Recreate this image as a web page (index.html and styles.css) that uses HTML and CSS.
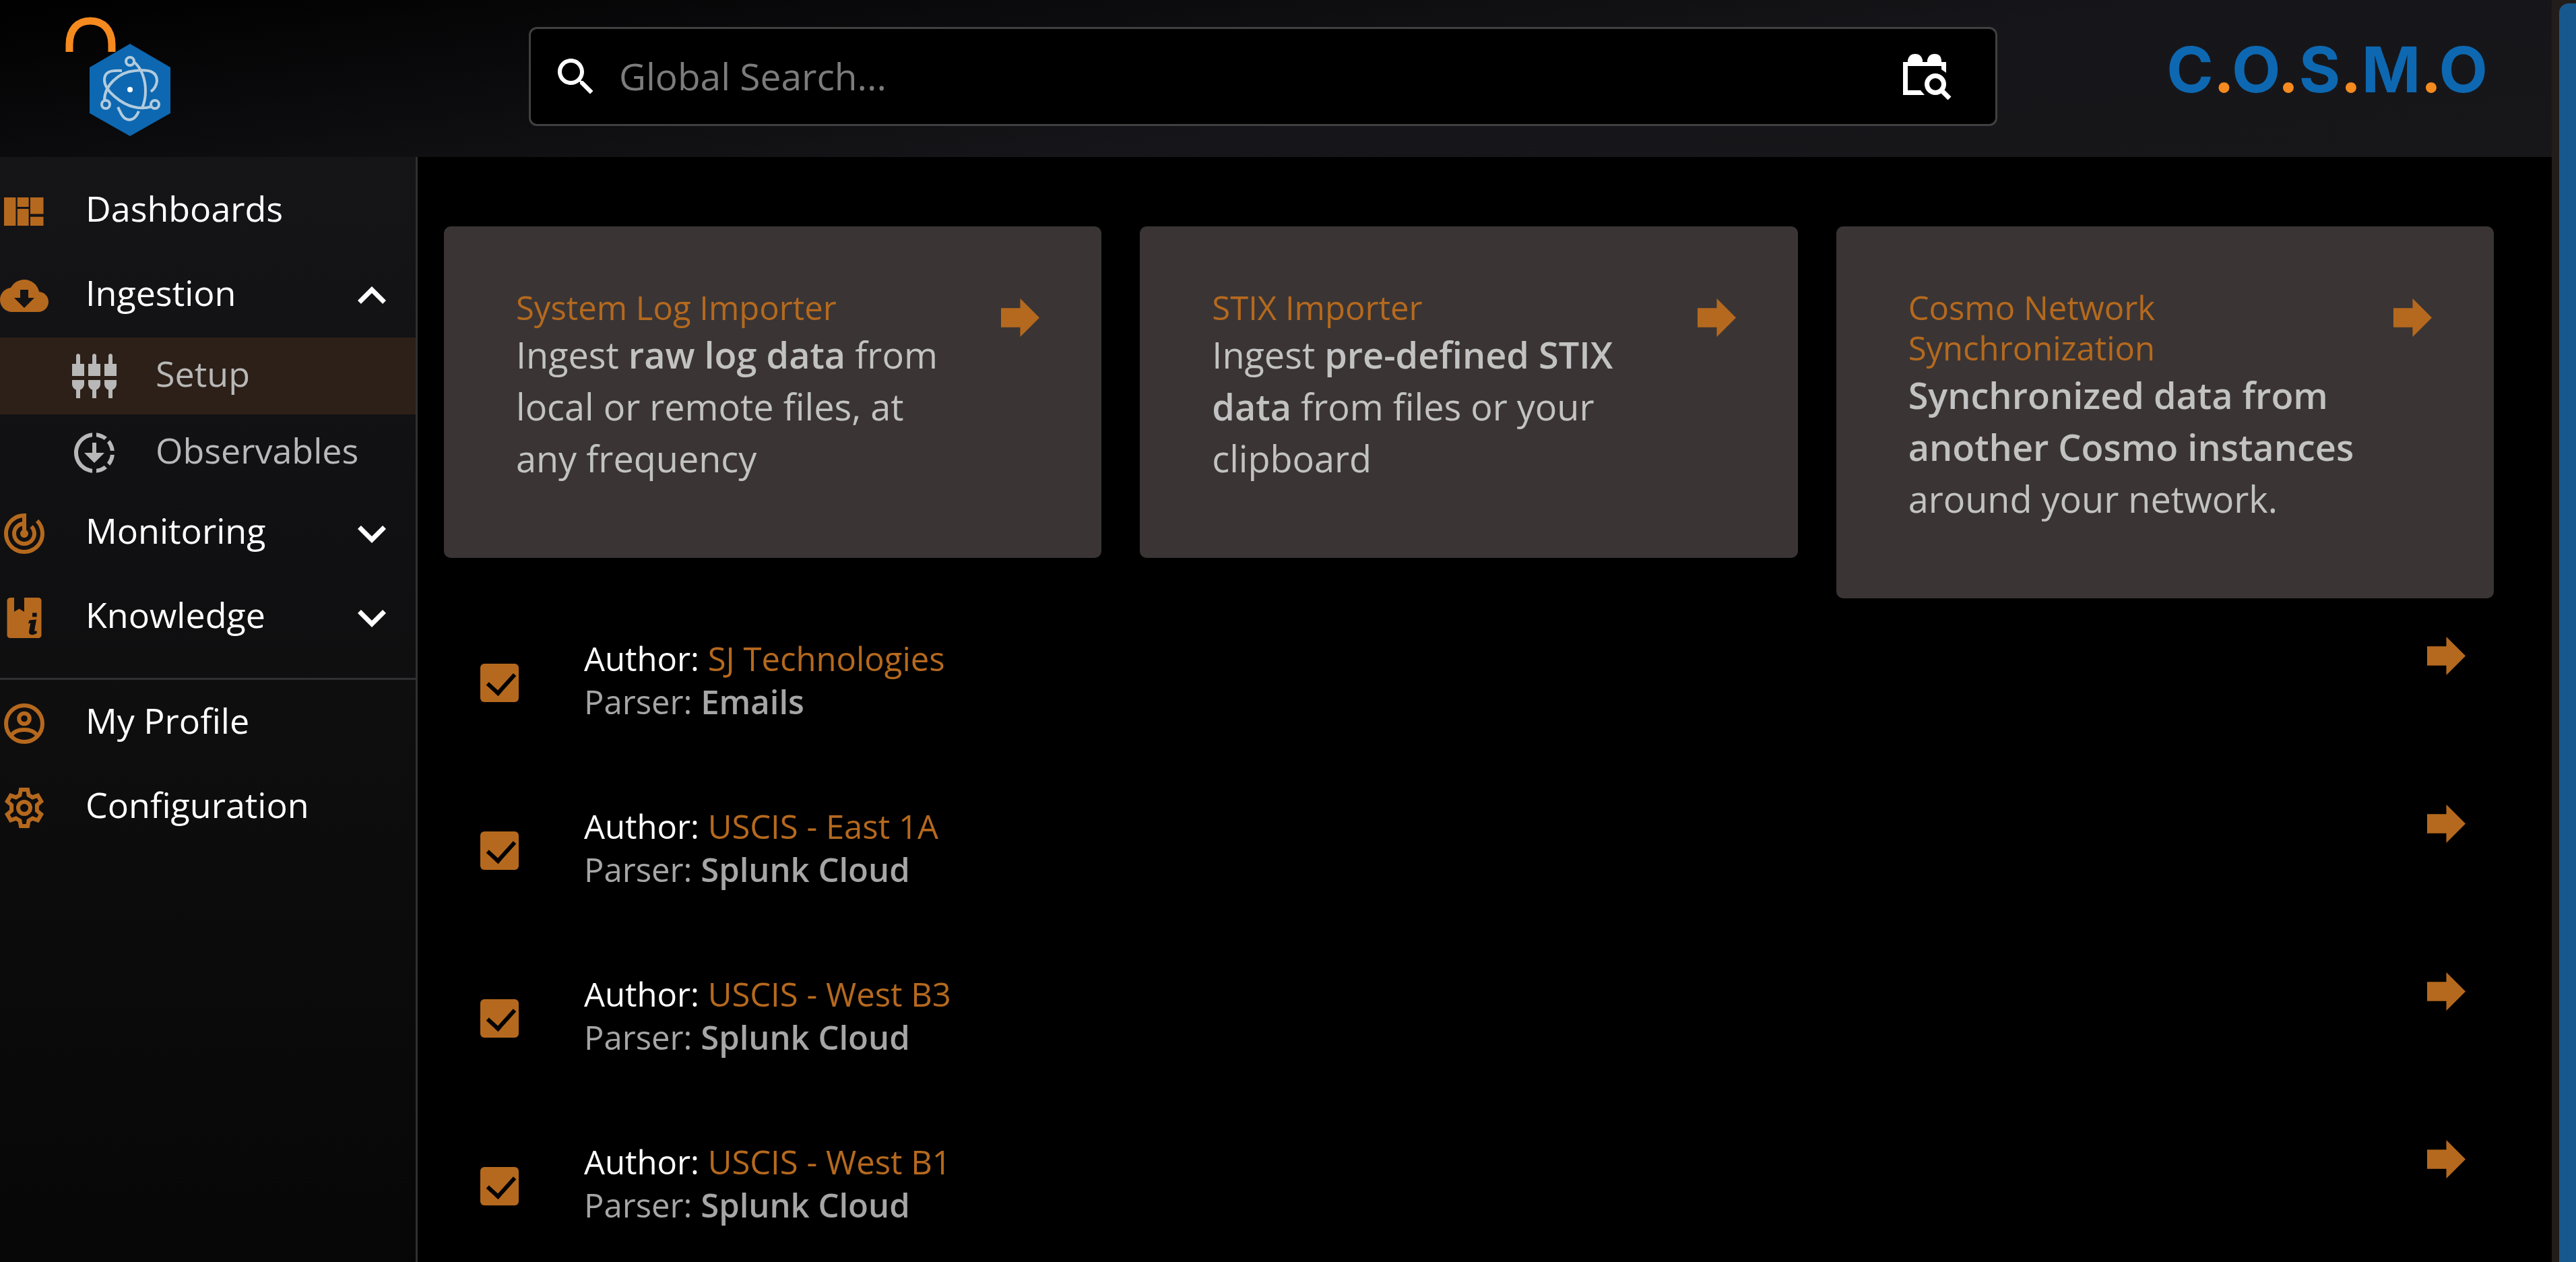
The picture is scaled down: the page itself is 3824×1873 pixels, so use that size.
FILE: index.html
```html
<!DOCTYPE html>
<html lang="en">
<head>
<meta charset="utf-8">
<meta name="viewport" content="width=device-width, initial-scale=1">
<title>C.O.S.M.O - Ingestion Setup</title>
<link rel="stylesheet" href="styles.css">
</head>
<body>
<svg class="defs" aria-hidden="true">
  <symbol id="forward" viewBox="4 4 16 16"><path d="M12 8V4l8 8-8 8v-4H4V8z"/></symbol>
  <symbol id="down" viewBox="0 0 24 24"><path d="M16.59 8.59 12 13.17 7.41 8.59 6 10l6 6 6-6z"/></symbol>
  <symbol id="up" viewBox="0 0 24 24"><path d="m12 8-6 6 1.410 1.410L12 10.830l4.590 4.580L18 14z"/></symbol>
</svg>
<div class="app">
  <header class="topbar">
    <a class="brand" href="#" aria-label="Home">
      <svg viewBox="96 20 160 184" aria-hidden="true">
        <path d="M103 77V66C103 44 115 31 134 31S166 44 166 66V77" fill="none" stroke="#f58a1f" stroke-width="11"/>
        <path d="M193 65 253 100V168L193 202 133 168V100Z" fill="#0d68b1"/>
        <g fill="none" stroke="#b3cbdd" stroke-width="4">
          <circle cx="193" cy="91" r="6"/><circle cx="157" cy="155" r="6"/><circle cx="230" cy="155" r="6"/>
          <path d="M199 92C210 101 216 118 216 135Q216 149 211 160"/>
          <path d="M206 165C199 182 185 182 178 165L175 159"/>
          <path d="M155 149C155 127 176 107 200 105C224 102 233 108 233 120Q232 130 224 136"/>
          <path d="M181 105C161 104 155 108 155 119C155 134 180 155 200 159Q213 162 225 158"/>
        </g>
        <circle cx="193" cy="133" r="4" fill="#fff"/>
      </svg>
    </a>
    <form class="search" role="search">
      <svg class="icon" viewBox="0 0 24 24" aria-hidden="true"><path d="M15.500 14h-.790l-.280-.270C15.410 12.590 16 11.110 16 9.500 16 5.910 13.090 3 9.500 3S3 5.910 3 9.500 5.910 16 9.500 16c1.610 0 3.090-.590 4.230-1.570l.270.280v.790l5 4.990L20.490 19l-4.990-5zm-6 0C7.010 14 5 11.990 5 9.500S7.010 5 9.500 5 14 7.010 14 9.500 11.990 14 9.500 14z"/></svg>
      <input type="search" placeholder="Global Search..." aria-label="Global Search">
      <button type="button" aria-label="Search by date">
        <svg class="calendar" viewBox="0 0 72 68" aria-hidden="true">
          <path d="M7 12V9Q9 0 18 0T29 9V12H36V9Q38 0 47 0T57 9V12H64V28L57 23V18H7V54H26L32 61H0V12Z"/>
          <g fill="none" stroke="#fff" stroke-width="7"><circle cx="48" cy="45" r="12.500"/><path d="m57 54 12 12"/></g>
        </svg>
      </button>
    </form>
    <a class="wordmark" href="#">C<i>.</i>O<i>.</i>S<i>.</i>M<i>.</i>O</a>
  </header>

  <nav class="sidebar" aria-label="Main">
    <a class="item" href="#">
      <svg class="icon" viewBox="0 0 24 24" aria-hidden="true"><path d="M2 5h5.800v14H2zM8.600 5h5.600v4.700H8.600zM8.600 10.700h5.600V19H8.600zM15 5h6.500v8.200H15zM15 14.600h6.500V19H15z"/></svg>
      <span>Dashboards</span>
    </a>
    <button class="item" type="button" aria-expanded="true">
      <svg class="icon" viewBox="0 0 24 24" aria-hidden="true"><path d="M19.350 10.040C18.670 6.590 15.640 4 12 4 9.110 4 6.600 5.640 5.350 8.040 2.340 8.360 0 10.910 0 14c0 3.310 2.690 6 6 6h13c2.760 0 5-2.240 5-5 0-2.640-2.050-4.780-4.650-4.960zM17 13l-5 5-5-5h3V9h4v4h3z"/></svg>
      <span>Ingestion</span>
      <svg class="chevron" aria-hidden="true"><use href="#up"/></svg>
    </button>
    <a class="item sub active" href="#" aria-current="page">
      <svg class="icon" viewBox="0 0 24 24" aria-hidden="true"><path d="M5 2c0-.55-.45-1-1-1s-1 .45-1 1v4H1v6h6V6H5V2zm4 14c0 1.300.840 2.400 2 2.820V23h2v-4.180c1.160-.410 2-1.510 2-2.820v-2H9v2zm-8 0c0 1.300.840 2.400 2 2.820V23h2v-4.180C6.160 18.400 7 17.300 7 16v-2H1v2zM21 6V2c0-.55-.45-1-1-1s-1 .45-1 1v4h-2v6h6V6h-2zm-8-4c0-.55-.45-1-1-1s-1 .45-1 1v4H9v6h6V6h-2V2zm4 14c0 1.300.840 2.400 2 2.820V23h2v-4.180c1.160-.410 2-1.510 2-2.820v-2h-6v2z"/></svg>
      <span>Setup</span>
    </a>
    <a class="item sub" href="#">
      <svg class="icon" viewBox="0 0 24 24" aria-hidden="true"><path d="M18.320 4.260C16.840 3.050 15.010 2.250 13 2.050v2.020c1.460.18 2.790.76 3.900 1.620l1.420-1.430zM19.930 11h2.020c-.2-2.010-1-3.840-2.210-5.320L18.310 7.100c.86 1.110 1.440 2.440 1.620 3.900zM18.310 16.900l1.430 1.430c1.210-1.480 2.010-3.320 2.210-5.320h-2.020c-.18 1.450-.76 2.780-1.620 3.890zM13 19.930v2.020c2.010-.2 3.840-1 5.320-2.210l-1.430-1.430c-1.100.86-2.430 1.440-3.890 1.620zM13 12V7h-2v5H7l5 5 5-5h-4zM11 19.930v2.020c-5.050-.5-9-4.760-9-9.950s3.950-9.450 9-9.950v2.020C7.050 4.560 4 7.920 4 12s3.050 7.440 7 7.930z"/></svg>
      <span>Observables</span>
    </a>
    <button class="item" type="button" aria-expanded="false">
      <svg class="icon" viewBox="0 0 24 24" aria-hidden="true"><path d="m19.070 4.930-1.410 1.410C19.100 7.790 20 9.790 20 12c0 4.420-3.580 8-8 8s-8-3.580-8-8c0-4.080 3.050-7.440 7-7.930v2.020C8.160 6.570 6 9.030 6 12c0 3.310 2.690 6 6 6s6-2.690 6-6c0-1.660-.67-3.160-1.760-4.240l-1.410 1.410C15.550 9.900 16 10.900 16 12c0 2.210-1.790 4-4 4s-4-1.790-4-4c0-1.860 1.280-3.410 3-3.860v2.140c-.6.350-1 .98-1 1.720 0 1.100.9 2 2 2s2-.9 2-2c0-.74-.4-1.380-1-1.720V2h-1C6.480 2 2 6.480 2 12s4.480 10 10 10 10-4.480 10-10c0-2.760-1.120-5.260-2.930-7.070z"/></svg>
      <span>Monitoring</span>
      <svg class="chevron" aria-hidden="true"><use href="#down"/></svg>
    </button>
    <button class="item" type="button" aria-expanded="false">
      <svg class="icon" viewBox="0 0 24 24" aria-hidden="true"><path fill-rule="evenodd" d="M5.500 2H7v7l2.500-1.500L12 9V2h7a1.500 1.500 0 0 1 1.500 1.500v17A1.500 1.500 0 0 1 19 22H5a1.500 1.500 0 0 1-1.500-1.500v-17Q3.500 2 5.500 2zM16 9.500h2.200v2H16zM14.500 13.200 18 12.800 17 18.500h1.200v1.200q-2 1.200-3.400.4-.7-.6-.4-1.800l.7-3.700-1.100.2z"/></svg>
      <span>Knowledge</span>
      <svg class="chevron" aria-hidden="true"><use href="#down"/></svg>
    </button>
    <hr>
    <a class="item" href="#">
      <svg class="icon line" viewBox="0 0 24 24" aria-hidden="true"><circle cx="12" cy="12" r="9"/><circle cx="12" cy="9.500" r="2.600"/><path d="M5.500 17.800Q7.500 15 12 15t6.500 2.800"/></svg>
      <span>My Profile</span>
    </a>
    <a class="item" href="#">
      <svg class="icon line" viewBox="0 0 24 24" aria-hidden="true"><circle cx="12" cy="12" r="3"/><path d="m10.300 3h3.400l.5 2.700 1.900 1.100 2.600-.9 1.700 2.900-2.100 1.800v2.800l2.100 1.800-1.700 2.900-2.600-.9-1.900 1.100-.5 2.700h-3.400l-.5-2.700-1.900-1.100-2.600.9-1.700-2.900 2.100-1.800v-2.800L3.600 8.800l1.700-2.900 2.600.9 1.900-1.100z"/></svg>
      <span>Configuration</span>
    </a>
  </nav>

  <main class="content">
    <section class="cards">
      <article class="card">
        <div class="card-text">
          <h2>System Log Importer</h2>
          <p>Ingest <b>raw log data</b> from local or remote files, at any frequency</p>
        </div>
        <a class="go" href="#" aria-label="Open System Log Importer"><svg><use href="#forward"/></svg></a>
      </article>
      <article class="card">
        <div class="card-text">
          <h2>STIX Importer</h2>
          <p>Ingest <b>pre-defined STIX data</b> from files or your clipboard</p>
        </div>
        <a class="go" href="#" aria-label="Open STIX Importer"><svg><use href="#forward"/></svg></a>
      </article>
      <article class="card">
        <div class="card-text">
          <h2>Cosmo Network Synchronization</h2>
          <p><b>Synchronized data from another Cosmo instances</b> around your network.</p>
        </div>
        <a class="go" href="#" aria-label="Open Cosmo Network Synchronization"><svg><use href="#forward"/></svg></a>
      </article>
    </section>

    <ul class="sources">
      <li>
        <input type="checkbox" id="s1" checked>
        <label for="s1"><span class="author">Author: <em>SJ Technologies</em></span><span class="parser">Parser: <b>Emails</b></span></label>
        <a class="go" href="#" aria-label="Open SJ Technologies"><svg><use href="#forward"/></svg></a>
      </li>
      <li>
        <input type="checkbox" id="s2" checked>
        <label for="s2"><span class="author">Author: <em>USCIS - East 1A</em></span><span class="parser">Parser: <b>Splunk Cloud</b></span></label>
        <a class="go" href="#" aria-label="Open USCIS - East 1A"><svg><use href="#forward"/></svg></a>
      </li>
      <li>
        <input type="checkbox" id="s3" checked>
        <label for="s3"><span class="author">Author: <em>USCIS - West B3</em></span><span class="parser">Parser: <b>Splunk Cloud</b></span></label>
        <a class="go" href="#" aria-label="Open USCIS - West B3"><svg><use href="#forward"/></svg></a>
      </li>
      <li>
        <input type="checkbox" id="s4" checked>
        <label for="s4"><span class="author">Author: <em>USCIS - West B1</em></span><span class="parser">Parser: <b>Splunk Cloud</b></span></label>
        <a class="go" href="#" aria-label="Open USCIS - West B1"><svg><use href="#forward"/></svg></a>
      </li>
    </ul>
  </main>

  <div class="scrollbar" aria-hidden="true"><div class="thumb"></div></div>
</div>
</body>
</html>
```
FILE: styles.css
```css
:root {
  --accent: #b5691e;
  --muted: #b8b8b8;
  --line: #303032;
}

* {
  box-sizing: border-box;
}

body {
  margin: 0;
  background: #000;
  color: #fff;
  font-family: "Open Sans", "Noto Sans", sans-serif;
}

a {
  color: inherit;
  text-decoration: none;
}

button {
  border: 0;
  padding: 0;
  background: none;
  color: inherit;
  font: inherit;
  text-align: left;
}

svg {
  display: block;
  flex: none;
  fill: currentColor;
}

.defs {
  display: none;
}

.app {
  display: grid;
  grid-template: auto 1fr / 620px 1fr 36px;
  height: 100vh;
  overflow: hidden;
}

/* Top bar */
.topbar {
  grid-column: 1 / 3;
  display: flex;
  align-items: flex-start;
  height: 233px;
  background: linear-gradient(172deg, #000 0%, #0b0b0d 30%, #16161a 60%, #17171a 100%);
}

.brand {
  margin: 20px 0 0 96px;
}

.brand svg {
  width: 160px;
  height: 184px;
}

.search {
  flex: 1;
  display: flex;
  align-items: center;
  height: 147px;
  margin: 40px 248px 0 529px;
  padding: 0 65px 0 31px;
  border: 3px solid #404040;
  border-radius: 12px;
  background: #000;
}

.search input {
  flex: 1;
  min-width: 0;
  margin-left: 28px;
  padding: 0 0 2px;
  border: 0;
  background: none;
  color: #fff;
  font: 55px/72px "Open Sans", "Noto Sans", sans-serif;
}

.search input::placeholder {
  color: #7c7c7c;
  opacity: 1;
}

.calendar {
  width: 72px;
  height: 68px;
}

.wordmark {
  flex: 0 0 480px;
  margin: 48px 95px 0 0;
  color: #0d68b1;
  font: 700 94px/110px Inter, sans-serif;
  text-align: right;
}

.wordmark i {
  color: #f58a1f;
  font-style: normal;
}

/* Side navigation */
.sidebar {
  padding-top: 18px;
  border-right: 3px solid var(--line);
  background: linear-gradient(#151518, #0e0e0f 50%, #060606);
}

.item {
  display: flex;
  align-items: center;
  gap: 55px;
  width: 100%;
  height: 125px;
  font-size: 52px;
  font-weight: 500;
  line-height: 72px;
}

.item span {
  padding-bottom: 9px;
}

.icon {
  width: 72px;
  height: 72px;
}

.item .icon {
  color: var(--accent);
}

.icon.line {
  fill: none;
  stroke: currentColor;
  stroke-width: 2;
}

.chevron {
  width: 84px;
  height: 84px;
  margin: 0 23px 0 auto;
}

.item.sub {
  height: 114px;
  padding-left: 104px;
  color: var(--muted);
  font-weight: 400;
}

.item.sub .icon {
  color: inherit;
}

.item.active {
  background: #2d2018;
}

.sidebar hr {
  height: 3px;
  margin: 27px 0 2px;
  border: 0;
  background: var(--line);
}

/* Importer cards */
.content {
  min-width: 0;
  padding: 103px 86px 0 39px;
}

.cards {
  display: grid;
  grid-template-columns: repeat(3, 1fr);
  align-items: start;
  gap: 57px;
}

.card {
  display: flex;
  justify-content: space-between;
  gap: 48px;
  padding: 90px 92px 109px 107px;
  border-radius: 10px;
  background: #3a3534;
}

.card h2 {
  margin: 0 0 2px;
  color: var(--accent);
  font-size: 49px;
  font-weight: 400;
  line-height: 60px;
}

.card p {
  margin: 0;
  color: #c2c2c2;
  font-size: 54px;
  line-height: 77px;
}

.go {
  color: var(--accent);
}

.go svg {
  width: 57px;
  height: 57px;
}

.card .go {
  margin-top: 17px;
}

/* Ingestion sources */
.sources {
  margin: 0;
  padding: 57px 42px 0 54px;
  list-style: none;
}

.sources li {
  display: flex;
  align-items: flex-start;
  height: 249px;
}

.sources input {
  appearance: none;
  width: 57px;
  height: 57px;
  margin: 40px 97px 0 0;
  border-radius: 6px;
  background: var(--accent);
}

.sources input::before {
  content: "";
  display: block;
  width: 18px;
  height: 34px;
  margin: 5px 0 0 19px;
  border: solid #000;
  border-width: 0 6px 6px 0;
  rotate: 42deg;
}

.sources label {
  flex: 1;
  font-size: 49px;
  line-height: 64px;
}

.sources span {
  display: block;
}

.sources em {
  color: var(--accent);
  font-style: normal;
}

.parser {
  color: #a6a6a6;
}

b {
  font-weight: 600;
}

/* Page scroll indicator */
.scrollbar {
  grid-area: 1 / 3 / 3 / 4;
  padding: 5px 0 0 11px;
  background: #221c1b;
}

.thumb {
  height: 100%;
  border-top-left-radius: 14px;
  background: #17598f;
}
```
